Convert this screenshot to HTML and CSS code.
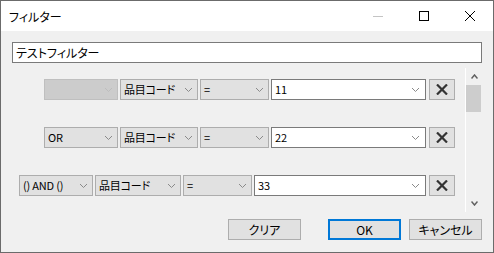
FILE: index.html
```html
<!DOCTYPE html>
<html lang="ja">
<head>
  <meta charset="UTF-8">
  <title>フィルター</title>
  <link rel="stylesheet" href="styles.css">
</head>
<body>
  <div class="window">
    <div class="titlebar">
      <span class="title">フィルター</span>
      <div class="controls">
        <div class="ctrl"><svg width="10" height="10" viewBox="0 0 10 10"><path d="M0 5.5H10" stroke="#c4c4c4" stroke-width="1"/></svg></div>
        <div class="ctrl"><svg width="10" height="10" viewBox="0 0 10 10"><rect x="0.5" y="0.5" width="9" height="9" fill="none" stroke="#000" stroke-width="1"/></svg></div>
        <div class="ctrl"><svg width="10" height="10" viewBox="0 0 10 10"><path d="M0 0L10 10M10 0L0 10" stroke="#000" stroke-width="1"/></svg></div>
      </div>
    </div>

    <div class="content">
      <div class="name-field">テストフィルター</div>

      <div class="panel">
        <div class="rows">
          <div class="row">
            <div class="combo w-logic disabled"><span class="combo-text"></span><svg class="arrow" width="7" height="4" viewBox="0 0 7 4"><path d="M0 0L3.5 3.5L7 0" fill="none" stroke="#bdbdbd"/></svg></div>
            <div class="combo w-field"><span class="combo-text">品目コード</span><svg class="arrow" width="7" height="4" viewBox="0 0 7 4"><path d="M0 0L3.5 3.5L7 0" fill="none" stroke="#8a8a8a"/></svg></div>
            <div class="combo w-op"><span class="combo-text">=</span><svg class="arrow" width="7" height="4" viewBox="0 0 7 4"><path d="M0 0L3.5 3.5L7 0" fill="none" stroke="#8a8a8a"/></svg></div>
            <div class="combo value w-value"><span class="combo-text">11</span><svg class="arrow" width="7" height="4" viewBox="0 0 7 4"><path d="M0 0L3.5 3.5L7 0" fill="none" stroke="#8a8a8a"/></svg></div>
            <div class="del"><svg width="12" height="11" viewBox="0 0 12 11"><path d="M1 0.5L11 10.5M11 0.5L1 10.5" stroke="#333" stroke-width="2.2"/></svg></div>
          </div>

          <div class="row">
            <div class="combo w-logic"><span class="combo-text">OR</span><svg class="arrow" width="7" height="4" viewBox="0 0 7 4"><path d="M0 0L3.5 3.5L7 0" fill="none" stroke="#8a8a8a"/></svg></div>
            <div class="combo w-field"><span class="combo-text">品目コード</span><svg class="arrow" width="7" height="4" viewBox="0 0 7 4"><path d="M0 0L3.5 3.5L7 0" fill="none" stroke="#8a8a8a"/></svg></div>
            <div class="combo w-op"><span class="combo-text">=</span><svg class="arrow" width="7" height="4" viewBox="0 0 7 4"><path d="M0 0L3.5 3.5L7 0" fill="none" stroke="#8a8a8a"/></svg></div>
            <div class="combo value w-value"><span class="combo-text">22</span><svg class="arrow" width="7" height="4" viewBox="0 0 7 4"><path d="M0 0L3.5 3.5L7 0" fill="none" stroke="#8a8a8a"/></svg></div>
            <div class="del"><svg width="12" height="11" viewBox="0 0 12 11"><path d="M1 0.5L11 10.5M11 0.5L1 10.5" stroke="#333" stroke-width="2.2"/></svg></div>
          </div>

          <div class="row">
            <div class="combo w-logic"><span class="combo-text">() AND ()</span><svg class="arrow" width="7" height="4" viewBox="0 0 7 4"><path d="M0 0L3.5 3.5L7 0" fill="none" stroke="#8a8a8a"/></svg></div>
            <div class="combo w-field-wide"><span class="combo-text">品目コード</span><svg class="arrow" width="7" height="4" viewBox="0 0 7 4"><path d="M0 0L3.5 3.5L7 0" fill="none" stroke="#8a8a8a"/></svg></div>
            <div class="combo w-op"><span class="combo-text">=</span><svg class="arrow" width="7" height="4" viewBox="0 0 7 4"><path d="M0 0L3.5 3.5L7 0" fill="none" stroke="#8a8a8a"/></svg></div>
            <div class="combo value w-value-wide"><span class="combo-text">33</span><svg class="arrow" width="7" height="4" viewBox="0 0 7 4"><path d="M0 0L3.5 3.5L7 0" fill="none" stroke="#8a8a8a"/></svg></div>
            <div class="del"><svg width="12" height="11" viewBox="0 0 12 11"><path d="M1 0.5L11 10.5M11 0.5L1 10.5" stroke="#333" stroke-width="2.2"/></svg></div>
          </div>
        </div>

        <div class="scrollbar">
          <div class="sb-btn"><svg width="7" height="5" viewBox="0 0 7 5"><path d="M0.5 4.5L3.5 1L6.5 4.5" fill="none" stroke="#606060" stroke-width="1.5"/></svg></div>
          <div class="sb-track"><div class="thumb"></div></div>
          <div class="sb-btn"><svg width="7" height="5" viewBox="0 0 7 5"><path d="M0.5 0.5L3.5 4L6.5 0.5" fill="none" stroke="#606060" stroke-width="1.5"/></svg></div>
        </div>
      </div>

      <div class="buttons">
        <div class="btn clear">クリア</div>
        <div class="btn default">OK</div>
        <div class="btn">キャンセル</div>
      </div>
    </div>
  </div>
</body>
</html>
```

FILE: styles.css
```css
* {
  box-sizing: border-box;
}

body {
  margin: 0;
  font-family: "Noto Sans CJK JP", sans-serif;
  font-size: 12px;
  font-feature-settings: "palt";
  color: #000;
  background: #fff;
}

.window {
  width: 494px;
  height: 253px;
  border: 1px solid #6b6b6b;
  background: #f0f0f0;
  display: flex;
  flex-direction: column;
}

.titlebar {
  height: 30px;
  background: #fff;
  display: flex;
  align-items: center;
}

.title {
  padding-left: 8px;
  font-size: 12px;
}

.controls {
  margin-left: auto;
  display: flex;
}

.ctrl {
  width: 46px;
  height: 30px;
  display: flex;
  align-items: center;
  justify-content: center;
}

.content {
  flex: 1;
  padding: 11px 11px 0 11px;
  display: flex;
  flex-direction: column;
}

.name-field {
  width: 470px;
  height: 21px;
  border: 1px solid #7a7a7a;
  background: #fff;
  padding-left: 3px;
  line-height: 19px;
}

.panel {
  margin-top: 5px;
  height: 144px;
  display: flex;
}

.rows {
  width: 453px;
  padding: 11px 10px 0 0;
  display: flex;
  flex-direction: column;
  gap: 27px;
}

.row {
  height: 21px;
  display: flex;
  justify-content: flex-end;
}

.combo {
  height: 21px;
  border: 1px solid #adadad;
  background: #e1e1e1;
  display: flex;
  align-items: center;
  padding: 0 5px 0 3px;
  margin-left: 2px;
}

.combo-text {
  white-space: nowrap;
  font-size: 11px;
  letter-spacing: -0.2px;
  line-height: 19px;
}

.arrow {
  margin-left: auto;
  flex: none;
}

.combo.disabled {
  background: #cccccc;
  border-color: #bfbfbf;
}

.combo.value {
  background: #fff;
  border-color: #7a7a7a;
  padding-right: 6px;
}

.w-logic { width: 74px; }
.w-field { width: 78px; }
.w-field-wide { width: 86px; }
.w-op { width: 69px; }
.w-value { width: 155px; }
.w-value-wide { width: 172px; }

.del {
  width: 26px;
  height: 21px;
  margin-left: 3px;
  border: 1px solid #adadad;
  background: #e1e1e1;
  display: flex;
  align-items: center;
  justify-content: center;
}

.scrollbar {
  width: 17px;
  border-left: 1px solid #fff;
  display: flex;
  flex-direction: column;
}

.sb-btn {
  height: 17px;
  display: flex;
  align-items: center;
  justify-content: center;
}

.sb-track {
  flex: 1;
}

.thumb {
  width: 15px;
  height: 27px;
  background: #cdcdcd;
}

.buttons {
  margin-top: 7px;
  display: flex;
  justify-content: flex-end;
}

.btn {
  width: 73px;
  height: 21px;
  border: 1px solid #adadad;
  background: #e1e1e1;
  text-align: center;
  line-height: 19px;
  margin-left: 8px;
}

.btn.clear {
  margin-right: 19px;
}

.btn.default {
  border: 2px solid #0078d7;
  line-height: 17px;
}
```
